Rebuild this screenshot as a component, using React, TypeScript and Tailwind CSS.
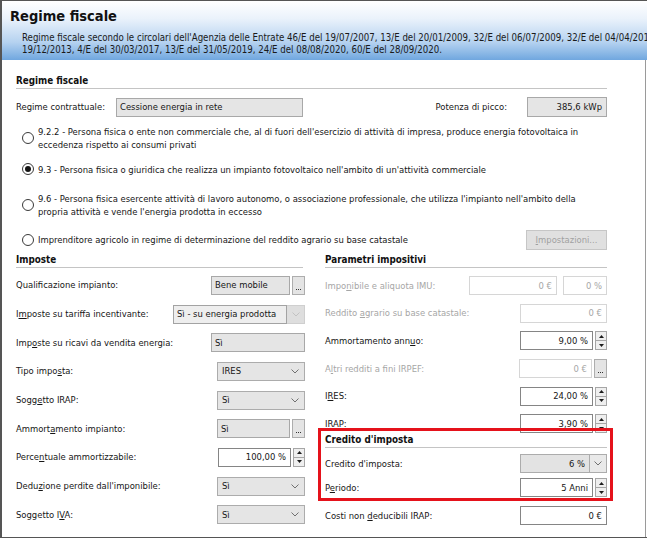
import React from 'react';

const FONT = "font-['DejaVu_Sans_Condensed','Liberation_Sans',sans-serif]";

function Chevron({ light }: { light?: boolean }) {
  return (
    <svg width="8" height="5" viewBox="0 0 8 5" className="shrink-0">
      <path d="M0.5 0.5 L4 4 L7.5 0.5" fill="none" stroke={light ? '#c2c2c2' : '#707070'} strokeWidth="1" />
    </svg>
  );
}

function Spinner() {
  return (
    <div className="flex h-[19px] w-[12px] shrink-0 flex-col border border-[#a6a6a6] bg-[#efefef]">
      <div className="flex flex-1 items-center justify-center border-b border-[#a6a6a6]">
        <svg width="5" height="3" viewBox="0 0 5 3">
          <path d="M2.5 0 L5 3 L0 3 Z" fill="#1c1c1c" />
        </svg>
      </div>
      <div className="flex flex-1 items-center justify-center">
        <svg width="5" height="3" viewBox="0 0 5 3">
          <path d="M0 0 L5 0 L2.5 3 Z" fill="#1c1c1c" />
        </svg>
      </div>
    </div>
  );
}

function Dots() {
  return (
    <div className="flex h-[19px] w-[13px] shrink-0 items-end justify-center gap-[1px] border border-[#adadad] bg-[#e4e4e4] pb-[4px]">
      <span className="h-[1px] w-[1px] bg-[#333]" />
      <span className="h-[1px] w-[1px] bg-[#333]" />
      <span className="h-[1px] w-[1px] bg-[#333]" />
    </div>
  );
}

function GrayBox({ w, children }: { w: string; children: React.ReactNode }) {
  return (
    <div className={`flex h-[19px] items-center border border-[#a8a8a8] bg-[#e5e5e5] px-[3px] ${w}`}>
      {children}
    </div>
  );
}

function Combo({ text }: { text: string }) {
  return (
    <div className="flex h-[19px] w-[88px] items-center justify-between border border-[#acacac] bg-[#e5e5e5] pl-[4px] pr-[5px]">
      <span>{text}</span>
      <Chevron />
    </div>
  );
}

function Spin({ text }: { text: string }) {
  return (
    <div className="flex items-center gap-[2px]">
      <div className="flex h-[19px] w-[73px] items-center justify-end border border-[#858585] bg-white pr-[4px]">{text}</div>
      <Spinner />
    </div>
  );
}

function Disabled({ w, text }: { w: string; text: string }) {
  return (
    <div className={`flex h-[19px] items-center justify-end border border-[#d6d6d6] bg-white pr-[4px] text-[#a6a6a6] ${w}`}>
      {text}
    </div>
  );
}

function Radio({ checked }: { checked?: boolean }) {
  return (
    <span className="flex h-[12px] w-[12px] shrink-0 items-center justify-center rounded-full border border-[#3a3a3a] bg-white">
      {checked && <span className="h-[6px] w-[6px] rounded-full bg-[#151515]" />}
    </span>
  );
}

function SectionTitle({ children }: { children: React.ReactNode }) {
  return (
    <div className="h-[15px] border-b border-[#c4c4c4] text-[9.8px] font-bold leading-[14px] text-[#111]">
      {children}
    </div>
  );
}

function LeftRow({ label, children }: { label: React.ReactNode; children: React.ReactNode }) {
  return (
    <div className="flex h-[28.7px] items-center justify-between">
      <span>{label}</span>
      {children}
    </div>
  );
}

function RightRow({ label, disabled, children }: { label: React.ReactNode; disabled?: boolean; children: React.ReactNode }) {
  return (
    <div className="flex h-[27.6px] items-center justify-between">
      <span className={disabled ? 'text-[#a6a6a6]' : ''}>{label}</span>
      {children}
    </div>
  );
}

export default function App() {
  return (
    <div className={`${FONT} h-[546px] w-[647px] overflow-hidden bg-white text-[9.4px] text-[#161616]`}>
      <div className="flex h-[538px] flex-col border-b border-l-2 border-t border-[#555555]">
        {/* title band */}
        <header className="h-[59px] shrink-0 overflow-hidden bg-[linear-gradient(to_bottom,#ffffff_0%,#eaf2fb_30%,#b5d2f0_70%,#70a7df_100%)] pl-[8px] pt-[6px]">
          <div className="text-[14.5px] font-bold leading-[18px] text-[#111]">Regime fiscale</div>
          <div className="mt-[7px] whitespace-nowrap pl-[12px] text-[9.6px] leading-[12px] text-[#1a1a1a]">
            <div>
              Regime fiscale secondo le circolari dell'Agenzia delle Entrate 46/E del 19/07/2007, 13/E del 20/01/2009, 32/E del 06/07/2009, 32/E del 04/04/2012, 12/E del
            </div>
            <div>19/12/2013, 4/E del 30/03/2017, 13/E del 31/05/2019, 24/E del 08/08/2020, 60/E del 28/09/2020.</div>
          </div>
        </header>

        <main className="mr-[1px] flex-1 border-r border-[#9a9a9a] pl-[14px] pt-[14px]">
          <div className="w-[591px]">
            <SectionTitle>Regime fiscale</SectionTitle>

            <div className="mt-[8px] flex h-[20px] items-center">
              <span className="w-[100px]">Regime contrattuale:</span>
              <GrayBox w="w-[187px]">Cessione energia in rete</GrayBox>
              <span className="flex-1 pr-[20px] text-right">Potenza di picco:</span>
              <div className="flex h-[20px] w-[80px] items-center justify-end border border-[#a8a8a8] bg-[#e5e5e5] pr-[4px]">
                385,6 kWp
              </div>
            </div>

            <div className="mt-[7.5px] flex items-center gap-[4px] pl-[6px] leading-[13px]">
              <Radio />
              <div className="whitespace-nowrap">
                9.2.2 - Persona fisica o ente non commerciale che, al di fuori dell'esercizio di attività di impresa, produce energia fotovoltaica in
                <br />
                eccedenza rispetto ai consumi privati
              </div>
            </div>

            <div className="mt-[12px] flex items-center gap-[4px] pl-[6px] leading-[13px]">
              <Radio checked />
              <div>9.3 - Persona fisica o giuridica che realizza un impianto fotovoltaico nell'ambito di un'attività commerciale</div>
            </div>

            <div className="mt-[16px] flex items-center gap-[4px] pl-[6px] leading-[13px]">
              <Radio />
              <div className="whitespace-nowrap">
                9.6 - Persona fisica esercente attività di lavoro autonomo, o associazione professionale, che utilizza l'impianto nell'ambito della
                <br />
                propria attività e vende l'energia prodotta in eccesso
              </div>
            </div>

            <div className="mt-[12.5px] flex h-[20px] items-center">
              <div className="flex flex-1 items-center gap-[4px] pl-[6px]">
                <Radio />
                <span>Imprenditore agricolo in regime di determinazione del reddito agrario su base catastale</span>
              </div>
              <div className="flex h-[20px] w-[81px] items-center justify-center border border-[#c6c6c6] bg-[#e0e0e0] text-[#a0a0a0]">
                <span>
                  <u>I</u>mpostazioni...
                </span>
              </div>
            </div>

            <div className="mt-[3px] flex gap-[20px]">
              {/* Imposte */}
              <div className="w-[289px]">
                <div className="pr-[2px]">
                  <SectionTitle>Imposte</SectionTitle>
                </div>
                <div className="mt-[3px]">
                  <LeftRow label="Qualificazione impianto:">
                    <div className="flex items-center gap-[2px]">
                      <GrayBox w="w-[79px]">Bene mobile</GrayBox>
                      <Dots />
                    </div>
                  </LeftRow>
                  <LeftRow
                    label={
                      <>
                        I<u>m</u>poste su tariffa incentivante:
                      </>
                    }
                  >
                    <div className="flex">
                      <div className="flex h-[19px] w-[114px] items-center border border-[#a3a3a3] bg-[#eeeeee] pl-[3px]">
                        Sì - su energia prodotta
                      </div>
                      <div className="flex h-[19px] w-[18px] items-center justify-center border border-l-0 border-[#cfcfcf] bg-[#dedede]">
                        <Chevron light />
                      </div>
                    </div>
                  </LeftRow>
                  <LeftRow
                    label={
                      <>
                        Imp<u>o</u>ste su ricavi da vendita energia:
                      </>
                    }
                  >
                    <GrayBox w="w-[94px]">Sì</GrayBox>
                  </LeftRow>
                  <LeftRow
                    label={
                      <>
                        Tipo impo<u>s</u>ta:
                      </>
                    }
                  >
                    <Combo text="IRES" />
                  </LeftRow>
                  <LeftRow
                    label={
                      <>
                        Sogg<u>e</u>tto IRAP:
                      </>
                    }
                  >
                    <Combo text="Sì" />
                  </LeftRow>
                  <LeftRow
                    label={
                      <>
                        Ammort<u>a</u>mento impianto:
                      </>
                    }
                  >
                    <div className="flex items-center gap-[2px]">
                      <GrayBox w="w-[73px]">Sì</GrayBox>
                      <Dots />
                    </div>
                  </LeftRow>
                  <LeftRow
                    label={
                      <>
                        Perce<u>n</u>tuale ammortizzabile:
                      </>
                    }
                  >
                    <Spin text="100,00 %" />
                  </LeftRow>
                  <LeftRow
                    label={
                      <>
                        Dedu<u>z</u>ione perdite dall'imponibile:
                      </>
                    }
                  >
                    <Combo text="Sì" />
                  </LeftRow>
                  <LeftRow
                    label={
                      <>
                        Soggetto I<u>V</u>A:
                      </>
                    }
                  >
                    <Combo text="Sì" />
                  </LeftRow>
                </div>
              </div>

              {/* Parametri impositivi */}
              <div className="w-[282px]">
                <SectionTitle>Parametri impositivi</SectionTitle>
                <div className="mt-[4px]">
                  <RightRow
                    disabled
                    label={
                      <>
                        Impo<u>n</u>ibile e aliquota IMU:
                      </>
                    }
                  >
                    <div className="flex gap-[6px]">
                      <Disabled w="w-[88px]" text="0 €" />
                      <Disabled w="w-[44px]" text="0 %" />
                    </div>
                  </RightRow>
                  <RightRow
                    disabled
                    label={
                      <>
                        Reddito <u>a</u>grario su base catastale:
                      </>
                    }
                  >
                    <Disabled w="w-[87px]" text="0 €" />
                  </RightRow>
                  <RightRow
                    label={
                      <>
                        Ammortamento ann<u>u</u>o:
                      </>
                    }
                  >
                    <Spin text="9,00 %" />
                  </RightRow>
                  <RightRow
                    disabled
                    label={
                      <>
                        A<u>l</u>tri redditi a fini IRPEF:
                      </>
                    }
                  >
                    <div className="flex items-center gap-[2px]">
                      <Disabled w="w-[73px]" text="0 €" />
                      <Dots />
                    </div>
                  </RightRow>
                  <RightRow
                    label={
                      <>
                        I<u>R</u>ES:
                      </>
                    }
                  >
                    <Spin text="24,00 %" />
                  </RightRow>
                  <RightRow label="IRAP:">
                    <Spin text="3,90 %" />
                  </RightRow>
                </div>

                {/* highlighted group */}
                <div className="relative z-10 -mt-[10px] ml-[-7px] mr-[-6px] border-[3px] border-[#e5121b] pb-0 pl-[4px] pr-[3px] pt-[2px]">
                  <SectionTitle>Credito d'imposta</SectionTitle>
                  <div className="mt-[6px] flex h-[20px] items-center justify-between">
                    <span>Credito d'imposta:</span>
                    <div className="flex">
                      <div className="flex h-[19px] w-[70px] items-center justify-end border border-[#acacac] bg-[#e3e3e3] pr-[4px]">
                        6 %
                      </div>
                      <div className="flex h-[19px] w-[17px] items-center justify-center border border-l-0 border-[#acacac] bg-[#e9e9e9]">
                        <Chevron />
                      </div>
                    </div>
                  </div>
                  <div className="mt-[4px] flex h-[20px] items-center justify-between">
                    <span>
                      P<u>e</u>riodo:
                    </span>
                    <Spin text="5 Anni" />
                  </div>
                </div>

                <div className="mt-[5px] flex h-[20px] items-center justify-between">
                  <span>
                    Costi non <u>d</u>educibili IRAP:
                  </span>
                  <div className="flex h-[19px] w-[87px] items-center justify-end border border-[#858585] bg-white pr-[4px]">0 €</div>
                </div>
              </div>
            </div>
          </div>
        </main>
      </div>
    </div>
  );
}
